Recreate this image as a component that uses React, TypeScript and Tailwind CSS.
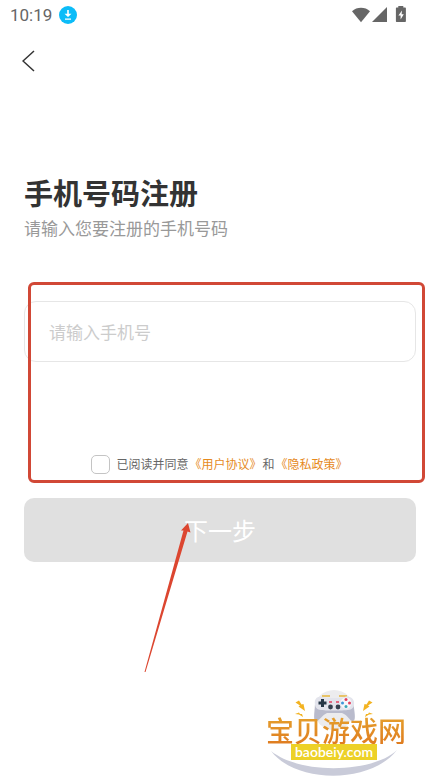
import { useState } from "react";

function StatusBar() {
    return (
        <div className="flex h-[30px] items-center justify-between pl-[10px] pr-[33px] text-[#666666]">
            <div className="flex items-center gap-[7px]">
                <span className="font-[Roboto,sans-serif] text-[17px] leading-[30px]">10:19</span>
                <svg width="18" height="18" viewBox="0 0 18 18" aria-hidden="true">
                    <circle cx="9" cy="9" r="9" fill="#0cbcf8" />
                    <path d="M8.200 4h1.600v3.800H12.500L9 11 5.500 7.800H8.200zM6 12.500h6v1.300H6z" fill="#fff" />
                </svg>
            </div>
            <svg width="55" height="18" viewBox="0 0 55 18" fill="currentColor" aria-hidden="true">
                <path d="M0 5.2C5 0.6 13 0.6 18 5.2L9 16.2z" />
                <path d="M35 1v15H20z" />
                <path d="M46.300 0h5v1.500h1.600c.6 0 1 .4 1 1V15c0 .6-.4 1-1 1h-8c-.6 0-1-.4-1-1V2.500c0-.6.4-1 1-1h1.400z" />
                <path d="M50 4.500l-3.600 5h2.200v4l3.200-5.200h-2.200z" fill="#fff" />
            </svg>
        </div>
    );
}

function PhoneForm() {
    const [phone, setPhone] = useState("");
    const [agreed, setAgreed] = useState(false);

    return (
        <form className="relative mt-[61px]" onSubmit={(e) => e.preventDefault()}>
            <input
                type="tel"
                aria-label="手机号"
                placeholder="请输入手机号"
                value={phone}
                onChange={(e) => setPhone(e.target.value)}
                className="block h-[61px] w-full rounded-xl border border-[#e6e6e6] px-6 text-[17px] text-[#333333] outline-none placeholder:text-[#cccccc]"
            />
            <div className="mt-[92px] flex h-5 items-center justify-center gap-[6px] text-xs text-[#666666]">
                <input
                    id="agree"
                    type="checkbox"
                    checked={agreed}
                    onChange={(e) => setAgreed(e.target.checked)}
                    className="size-[19px] appearance-none rounded-[5px] border border-[#c4c4c4] checked:bg-[#e68a1e]"
                />
                <label htmlFor="agree" className="whitespace-nowrap">
                    已阅读并同意
                    <a href="#terms" className="mx-px text-[#e68a1e]">《用户协议》</a>
                    和
                    <a href="#privacy" className="mx-px text-[#e68a1e]">《隐私政策》</a>
                </label>
            </div>
            <button
                type="submit"
                className="mt-6 block h-16 w-full rounded-[10px] bg-[#e0e0e0] text-2xl text-white"
            >
                下一步
            </button>

            {/* Callouts over the form */}
            <div className="pointer-events-none absolute -right-[9px] -top-[19px] left-1 h-[201px] rounded-md border-3 border-[#d14836]" />
            <svg
                className="pointer-events-none absolute left-[120px] top-[221px]"
                width="50"
                height="152"
                viewBox="0 0 50 152"
                aria-hidden="true"
            >
                <path d="M44 1L46.500 10.500L43.500 9.500L1.500 150L.5 150L39.500 8.500L37 8.500z" fill="#dc4630" />
            </svg>
        </form>
    );
}

function SiteLogo() {
    return (
        <div className="relative h-[90px] w-[140px]">
            <svg className="absolute inset-0" width="140" height="90" viewBox="0 0 140 90" aria-hidden="true">
                <path d="M5 63C30 96 105 96 131 62C109 84 36 88 5 63z" fill="#c9cbd9" />
                <circle cx="68" cy="22" r="20" fill="#ececee" />
                <path d="M56 8h8M73 8h8" stroke="#e8c468" strokeWidth="2" />
                <path
                    d="M55 9C50 9 49 14 49 20C48 27 47 34 51 33C54 32 56 27 61 25H76C82 27 83 32 86 33C90 34 89 27 88 20C87 12 85 9 80 9Q77 11 74 11H62Q59 11 55 9z"
                    fill="#b9bbcc"
                />
                <path
                    d="M55 8.500C50 8.500 48 12 49 17C50 23 56 22 60 22.500H76C81 22 87 23 88 17C89 11 85 8.500 80 8.500Q77 10 74 10H62Q59 10 55 8.500z"
                    fill="#e3e4ec"
                />
                <path d="M56.500 11v8M52.500 15h8" stroke="#263746" strokeWidth="3" />
                <circle cx="64.500" cy="19" r="2.400" fill="#35414f" />
                <circle cx="72" cy="19" r="2.400" fill="#35414f" />
                <path d="M63 14h3M70 14h3" stroke="#e2405f" strokeWidth="1.500" />
                <circle cx="80" cy="15" r="5.500" fill="#f6f6fa" />
                <circle cx="80" cy="11.500" r="1.500" fill="#e2405f" />
                <circle cx="76.500" cy="15" r="1.500" fill="#3e96d8" />
                <circle cx="83.500" cy="15" r="1.500" fill="#e2405f" />
                <circle cx="80" cy="18.500" r="1.500" fill="#3ba7b8" />
                <path
                    d="M29.500 14.500L33 12.500L35.500 16.500L37.500 16L39 23L32.500 18.500L34 17.500zM29 26l4-1.500 1 1.500h2l1 3-4-2.500zM106.500 14.500L103 12.500L100.500 16.500L98.500 16L97 23L103.500 18.500L102 17.500zM107 26l-4-1.500-1 1.500h-2l-1 3 4-2.500z"
                    fill="#f3b321"
                />
            </svg>
            <div className="relative flex flex-col items-center pt-[28px]">
                <span className="whitespace-nowrap bg-linear-to-b from-[#e5a02c] to-[#df7c20] bg-clip-text text-[28px] font-medium leading-[28px] text-transparent">
                    宝贝游戏网
                </span>
                <span className="mr-1 h-4 bg-[#edd127] px-1 font-[Lato,sans-serif] text-sm font-semibold leading-[15px] text-white">
                    baobeiy.com
                </span>
            </div>
        </div>
    );
}

export default function App() {
    return (
        <div className="min-h-screen bg-white font-['Noto_Sans_CJK_SC',sans-serif]">
            <StatusBar />
            <header className="flex h-[62px] items-center px-[22px]">
                <button type="button" aria-label="返回">
                    <svg width="13" height="22" viewBox="0 0 13 22" fill="none" stroke="#333" strokeWidth="1.500" aria-hidden="true">
                        <path d="M12 1L1 11l11 10" />
                    </svg>
                </button>
            </header>
            <main className="px-6 pt-20">
                <h1 className="text-[29px] font-bold leading-[40px] text-[#333333]">手机号码注册</h1>
                <p className="mt-1 text-[17px] leading-6 text-[#999999]">请输入您要注册的手机号码</p>
                <PhoneForm />
            </main>
            <footer className="mt-[126px] flex justify-end pr-[34px]">
                <SiteLogo />
            </footer>
        </div>
    );
}
